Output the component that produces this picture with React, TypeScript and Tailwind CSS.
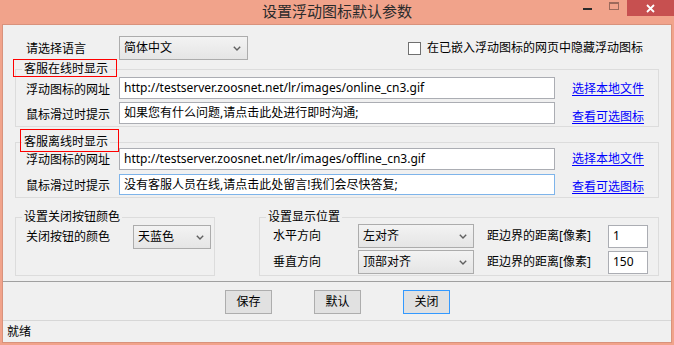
import React from "react";

function Chevron() {
  return (
    <svg width="8" height="5" viewBox="0 0 8 5" className="shrink-0">
      <path d="M0.8 0.8 L4 4 L7.2 0.8" stroke="#606060" strokeWidth="1.4" fill="none" />
    </svg>
  );
}

function Select({ value, w }: { value: string; w: string }) {
  return (
    <div
      className={`${w} h-[24px] flex items-center justify-between pl-[4px] pr-[6px] border border-[#acacac] bg-linear-to-b from-[#f3f3f3] to-[#e5e5e5] shrink-0`}
    >
      <span className="leading-[16px]">{value}</span>
      <Chevron />
    </div>
  );
}

function Input({ value, w, h, focus }: { value: string; w: string; h: string; focus?: boolean }) {
  return (
    <div
      className={`${w} ${h} flex items-center pl-[4px] bg-white border shrink-0 ${focus ? "border-[#7eb4ea]" : "border-[#abadb3]"}`}
    >
      <span className="leading-[16px] whitespace-nowrap">{value}</span>
    </div>
  );
}

function GroupTitle({ text }: { text: string }) {
  return (
    <span className="absolute left-[6px] top-[-9px] px-[2px] bg-[#f0f0f0] leading-[16px] whitespace-nowrap">{text}</span>
  );
}

function Link({ text, extra }: { text: string; extra?: string }) {
  return <span className={`ml-[17px] text-[#0000ff] underline underline-offset-2 leading-[16px] ${extra ?? ""}`}>{text}</span>;
}

export default function App() {
  return (
    <div className="w-[674px] h-[345px] bg-[#f1a38b] flex flex-col font-['Noto_Sans','Noto_Sans_CJK_SC',sans-serif] text-[12px] text-black overflow-hidden">
      {/* Title bar */}
      <div className="h-[25px] flex shrink-0">
        <div className="flex-1" />
        <div className="text-[15px] leading-[20px] pt-[1px] text-[#2b2b2b] whitespace-nowrap">设置浮动图标默认参数</div>
        <div className="flex-1 flex justify-end items-start">
          <div className="w-[9px] h-[2px] mt-[8px] bg-[#2b2b2b]" />
          <div className="w-[10px] h-[8px] mt-[2px] ml-[17px] border border-t-2 border-[#9c6a5b]" />
          <div className="w-[47px] h-[16px] ml-[8px] bg-[#c75050] flex items-center justify-center">
            <svg width="9" height="9" viewBox="0 0 9 9">
              <path d="M1 1 L8 8 M8 1 L1 8" stroke="#ffffff" strokeWidth="1.8" />
            </svg>
          </div>
        </div>
      </div>

      {/* Client */}
      <div className="mx-[3px] h-[317px] bg-[#f0f0f0] shadow-[0_0_0_1px_#d9927c] flex flex-col shrink-0">
        {/* Row 1 */}
        <div className="mt-[11px] h-[24px] flex items-center">
          <span className="pl-[23px] w-[116px] leading-[16px] pt-[1px]">请选择语言</span>
          <Select value="简体中文" w="w-[129px]" />
          <div className="ml-[160px] w-[13px] h-[13px] border border-[#707070] bg-white" />
          <span className="ml-[6px] leading-[16px]">在已嵌入浮动图标的网页中隐藏浮动图标</span>
        </div>

        {/* Group 1 */}
        <div className="mt-[9px] ml-[12px] w-[644px] h-[58px] border border-[#dcdcdc] relative pt-[7px] pl-[10px] flex flex-col gap-[3px]">
          <GroupTitle text="客服在线时显示" />
          <div className="absolute left-[-3px] top-[-11px] w-[104px] h-[18px] border border-[#ff0000]" />
          <div className="flex items-center h-[22px]">
            <span className="w-[93px] leading-[16px] pt-[3px]">浮动图标的网址</span>
            <Input value="http://testserver.zoosnet.net/lr/images/online_cn3.gif" w="w-[436px]" h="h-[22px]" />
            <Link text="选择本地文件" extra="pt-[2px]" />
          </div>
          <div className="flex items-center h-[22px]">
            <span className="w-[93px] leading-[16px] pt-[4px]">鼠标滑过时提示</span>
            <Input value="如果您有什么问题,请点击此处进行即时沟通;" w="w-[436px]" h="h-[22px]" />
            <Link text="查看可选图标" extra="pt-[8px]" />
          </div>
        </div>

        {/* Group 2 */}
        <div className="mt-[15px] ml-[12px] w-[644px] h-[56px] border border-[#dcdcdc] relative pt-[5px] pl-[10px] flex flex-col gap-[4px]">
          <GroupTitle text="客服离线时显示" />
          <div className="absolute left-[4px] top-[-14px] w-[99px] h-[23px] border border-[#ff0000]" />
          <div className="flex items-center h-[22px]">
            <span className="w-[93px] leading-[16px] pt-[2px]">浮动图标的网址</span>
            <Input value="http://testserver.zoosnet.net/lr/images/offline_cn3.gif" w="w-[436px]" h="h-[22px]" />
            <Link text="选择本地文件" />
          </div>
          <div className="flex items-center h-[21px]">
            <span className="w-[93px] leading-[16px] pt-[2px]">鼠标滑过时提示</span>
            <Input value="没有客服人员在线,请点击此处留言!我们会尽快答复;" w="w-[436px]" h="h-[21px]" focus />
            <Link text="查看可选图标" extra="pt-[4px]" />
          </div>
        </div>

        {/* Groups 3 & 4 */}
        <div className="mt-[19px] ml-[12px] flex gap-[44px] h-[59px]">
          <div className="w-[200px] border border-[#dcdcdc] relative pt-[7px] pl-[10px]">
            <GroupTitle text="设置关闭按钮颜色" />
            <div className="flex items-center h-[24px]">
              <span className="w-[107px] leading-[16px]">关闭按钮的颜色</span>
              <Select value="天蓝色" w="w-[78px]" />
            </div>
          </div>
          <div className="w-[400px] border border-[#dcdcdc] relative pt-[6px] pl-[13px] flex flex-col gap-[2px]">
            <GroupTitle text="设置显示位置" />
            <div className="flex items-center h-[24px]">
              <span className="w-[85px] leading-[16px]">水平方向</span>
              <Select value="左对齐" w="w-[116px]" />
              <span className="ml-[13px] w-[121px] leading-[16px]">距边界的距离[像素]</span>
              <Input value="1" w="w-[40px]" h="h-[23px]" />
            </div>
            <div className="flex items-center h-[24px]">
              <span className="w-[85px] leading-[16px]">垂直方向</span>
              <Select value="顶部对齐" w="w-[116px]" />
              <span className="ml-[13px] w-[121px] leading-[16px]">距边界的距离[像素]</span>
              <Input value="150" w="w-[40px]" h="h-[23px]" />
            </div>
          </div>
        </div>

        {/* Separator */}
        <div className="mt-[5px] h-px bg-[#a0a0a0] shrink-0" />

        {/* Buttons */}
        <div className="mt-[8px] h-[24px] flex pl-[222px] gap-[42px] shrink-0">
          <div className="w-[47px] h-[24px] bg-[#e1e1e1] border border-[#adadad] flex items-center justify-center leading-[16px]">保存</div>
          <div className="w-[47px] h-[24px] bg-[#e1e1e1] border border-[#adadad] flex items-center justify-center leading-[16px]">默认</div>
          <div className="w-[47px] h-[24px] bg-[#e1e1e1] border border-[#3399ff] flex items-center justify-center leading-[16px]">关闭</div>
        </div>

        {/* Separator 2 */}
        <div className="mt-[6px] h-px bg-[#d7d7d7] shrink-0" />

        {/* Status */}
        <div className="flex-1 flex items-center pl-[4px]">
          <span className="leading-[16px]">就绪</span>
        </div>
      </div>
    </div>
  );
}
